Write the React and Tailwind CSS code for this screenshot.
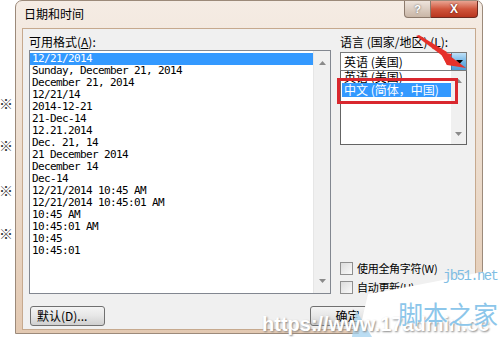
import React from "react";

const formats = [
  "12/21/2014",
  "Sunday, December 21, 2014",
  "December 21, 2014",
  "12/21/14",
  "2014-12-21",
  "21-Dec-14",
  "12.21.2014",
  "Dec. 21, 14",
  "21 December 2014",
  "December 14",
  "Dec-14",
  "12/21/2014 10:45 AM",
  "12/21/2014 10:45:01 AM",
  "10:45 AM",
  "10:45:01 AM",
  "10:45",
  "10:45:01",
];

const cjk = { fontFamily: '"Noto Sans CJK SC", "Noto Sans", sans-serif' };
const mono = { fontFamily: '"DejaVu Sans Mono", "Liberation Mono", monospace' };

const Arrow = ({ up }) => (
  <svg width="7" height="4" viewBox="0 0 7 4">
    <path d={up ? "M0 4 L3.5 0 L7 4 Z" : "M0 0 L3.5 4 L7 0 Z"} fill="#8a8a8a" />
  </svg>
);

const Btn = ({ children, className = "" }) => (
  <div
    className={
      "h-[20px] rounded-[3px] border border-[#707070] bg-gradient-to-b from-[#f4f4f4] via-[#e6e6e6] to-[#cfcfcf] flex items-center text-[12px] text-black " +
      className
    }
    style={cjk}
  >
    {children}
  </div>
);

const Check = ({ label }) => (
  <div className="flex items-center gap-[4px] h-[13px]">
    <div className="w-[13px] h-[13px] border border-[#8f8f8f] bg-gradient-to-br from-[#dcdcdc] to-[#fafafa]" />
    <span className="text-[11px] leading-[13px] text-black whitespace-nowrap tracking-[-0.3px]" style={cjk}>
      {label}
    </span>
  </div>
);

export default function App() {
  return (
    <div className="relative w-[500px] h-[337px] bg-white overflow-hidden flex">
      {/* page text behind the dialog */}
      <div className="w-[15px] shrink-0 flex flex-col text-[14px] text-[#333] leading-none" style={cjk}>
        <span className="mt-[96px] -ml-[1px]">※</span>
        <span className="mt-[28px] -ml-[1px]">※</span>
        <span className="mt-[31px] -ml-[1px]">※</span>
        <span className="mt-[29px] -ml-[1px]">※</span>
      </div>

      {/* dialog window */}
      <div className="w-[468px] h-[334px] shrink-0 rounded-t-[7px] border border-[#9c8a7a] bg-gradient-to-b from-[#f5ece4] via-[#ecdccd] to-[#e3c9b2] flex flex-col px-[6px] pb-[6px]">
        {/* title bar */}
        <div className="h-[27px] shrink-0 flex items-start">
          <span className="mt-[6px] ml-[2px] text-[12px] leading-[14px] text-black" style={cjk}>
            日期和时间
          </span>
          <div className="ml-auto -mr-[2px] flex">
            <div className="w-[27px] h-[17px] rounded-bl-[4px] border border-t-0 border-[#8c7a6c] bg-gradient-to-b from-[#eee4dc] to-[#c9b6a6] flex items-center justify-center text-[11px] font-bold text-white leading-none" style={{ fontFamily: '"Liberation Sans", sans-serif', textShadow: "0 0 2px #555" }}>
              ?
            </div>
            <div className="w-[47px] h-[17px] rounded-br-[4px] border border-t-0 border-l-0 border-[#6e2a20] bg-gradient-to-b from-[#e8a391] via-[#d0553c] to-[#b8361f] flex items-center justify-center text-[12px] font-bold text-white leading-none" style={{ fontFamily: '"Liberation Sans", sans-serif', textShadow: "0 0 2px #400" }}>
              X
            </div>
          </div>
        </div>

        {/* client area */}
        <div className="flex-1 bg-[#f0f0f0] border border-[#c6a98e] flex flex-col px-[6px] pt-[7px] pb-[3px]">
          <div className="flex gap-[9px]">
            {/* formats */}
            <div className="w-[302px] flex flex-col">
              <span className="text-[12px] leading-[12px] h-[12px] text-black" style={cjk}>
                可用格式(<span className="underline">A</span>):
              </span>
              <div className="mt-[2px] h-[244px] border border-[#828790] bg-white flex">
                <div className="flex-1 pt-[2px]">
                  {formats.map((f, i) => (
                    <div
                      key={f}
                      className={
                        "h-[12px] leading-[12px] pl-[2px] text-[11px] tracking-[-0.62px] whitespace-pre " +
                        (i === 0 ? "bg-[#3399ff] text-white" : "text-black")
                      }
                      style={mono}
                    >
                      {f}
                    </div>
                  ))}
                </div>
                <div className="w-[17px] bg-[#f0f0f0] border-l border-[#e6e6e6] flex flex-col items-center justify-between py-[10px]">
                  <Arrow up />
                  <Arrow />
                </div>
              </div>
            </div>

            {/* language */}
            <div className="w-[127px] flex flex-col">
              <span className="text-[12px] leading-[12px] h-[12px] text-black whitespace-nowrap" style={cjk}>
                语言 (国家/地区) (<span className="underline">L</span>):
              </span>
              <div className="mt-[4px] h-[19px] border border-[#7a7a7a] bg-white flex">
                <span className="flex-1 pl-[3px] text-[12px] leading-[17px] text-black" style={cjk}>
                  英语 (美国)
                </span>
                <div className="w-[15px] bg-gradient-to-b from-[#bfe1f8] via-[#73b6e6] to-[#4d9bd6] border-l border-[#3c7fb1] flex items-center justify-center">
                  <svg width="7" height="4" viewBox="0 0 7 4">
                    <path d="M0 0 L3.5 4 L7 0 Z" fill="#000" />
                  </svg>
                </div>
              </div>
              <div className="h-[74px] border border-t-0 border-[#646464] bg-white flex">
                <div className="flex-1 pl-[1px]">
                  <div className="h-[12px] leading-[11px] pl-[2px] text-[12px] text-black overflow-hidden" style={cjk}>
                    英语 (美国)
                  </div>
                  <div className="h-[14px] leading-[14px] pl-[2px] text-[12px] bg-[#3399ff] text-white whitespace-nowrap" style={cjk}>
                    中文 (简体，中国)
                  </div>
                </div>
                <div className="w-[15px] bg-[#f0f0f0] flex flex-col items-center justify-between pt-[8px] pb-[8px]">
                  <Arrow up />
                  <Arrow />
                </div>
              </div>
              <div className="mt-auto flex flex-col gap-[6px]">
                <Check label="使用全角字符(W)" />
                <Check label="自动更新(U)" />
              </div>
            </div>
          </div>

          {/* buttons */}
          <div className="mt-[12px] flex">
            <Btn className="w-[75px] ml-[1px] pl-[6px]">默认(D)...</Btn>
            <Btn className="w-[75px] ml-[205px] justify-center">确定</Btn>
            <Btn className="w-[75px] ml-[6px] justify-center">取消</Btn>
          </div>
        </div>
      </div>

      {/* red annotations */}
      <div className="absolute left-[337px] top-[78px] w-[121px] h-[26px] border-[3px] border-[#d9272e]" />
      <svg className="absolute left-0 top-0" width="500" height="337" viewBox="0 0 500 337">
        <path d="M416 36 L419 35 L447 52 L444 57 Z" fill="#e5302a" />
        <path d="M438 47 L466 68 L447 65 Z" fill="#e5302a" />
        <path d="M440 52 L452 54 L447 65 Z" fill="#e5302a" />
        {/* watermark swoosh */}
        <path d="M368 294 Q432 283 500 268 L500 337 L358 337 Z" fill="#ffffff" />
        <path d="M356 310 L372 337 L352 337 Z" fill="#a9d4f0" opacity="0.8" />
      </svg>

      <div
        className="absolute left-[262px] top-[314px] text-[20px] font-bold text-white leading-none whitespace-nowrap"
        style={{ fontFamily: '"Liberation Sans", sans-serif', textShadow: "1px 1px 2px #888" }}
      >
        https://www.17admin.cc
      </div>
      <div className="absolute left-[443px] top-[269px] text-[14px] tracking-[-1.6px] text-[#7fbde3] leading-none" style={{ fontFamily: '"Liberation Mono", monospace' }}>
        jb51.net
      </div>
      <div
        className="absolute left-[398px] top-[301px] text-[25px] text-[#8cc6ea] leading-none"
        style={{ ...cjk, textShadow: "0 0 2px #fff" }}
      >
        脚本之家
      </div>
    </div>
  );
}
